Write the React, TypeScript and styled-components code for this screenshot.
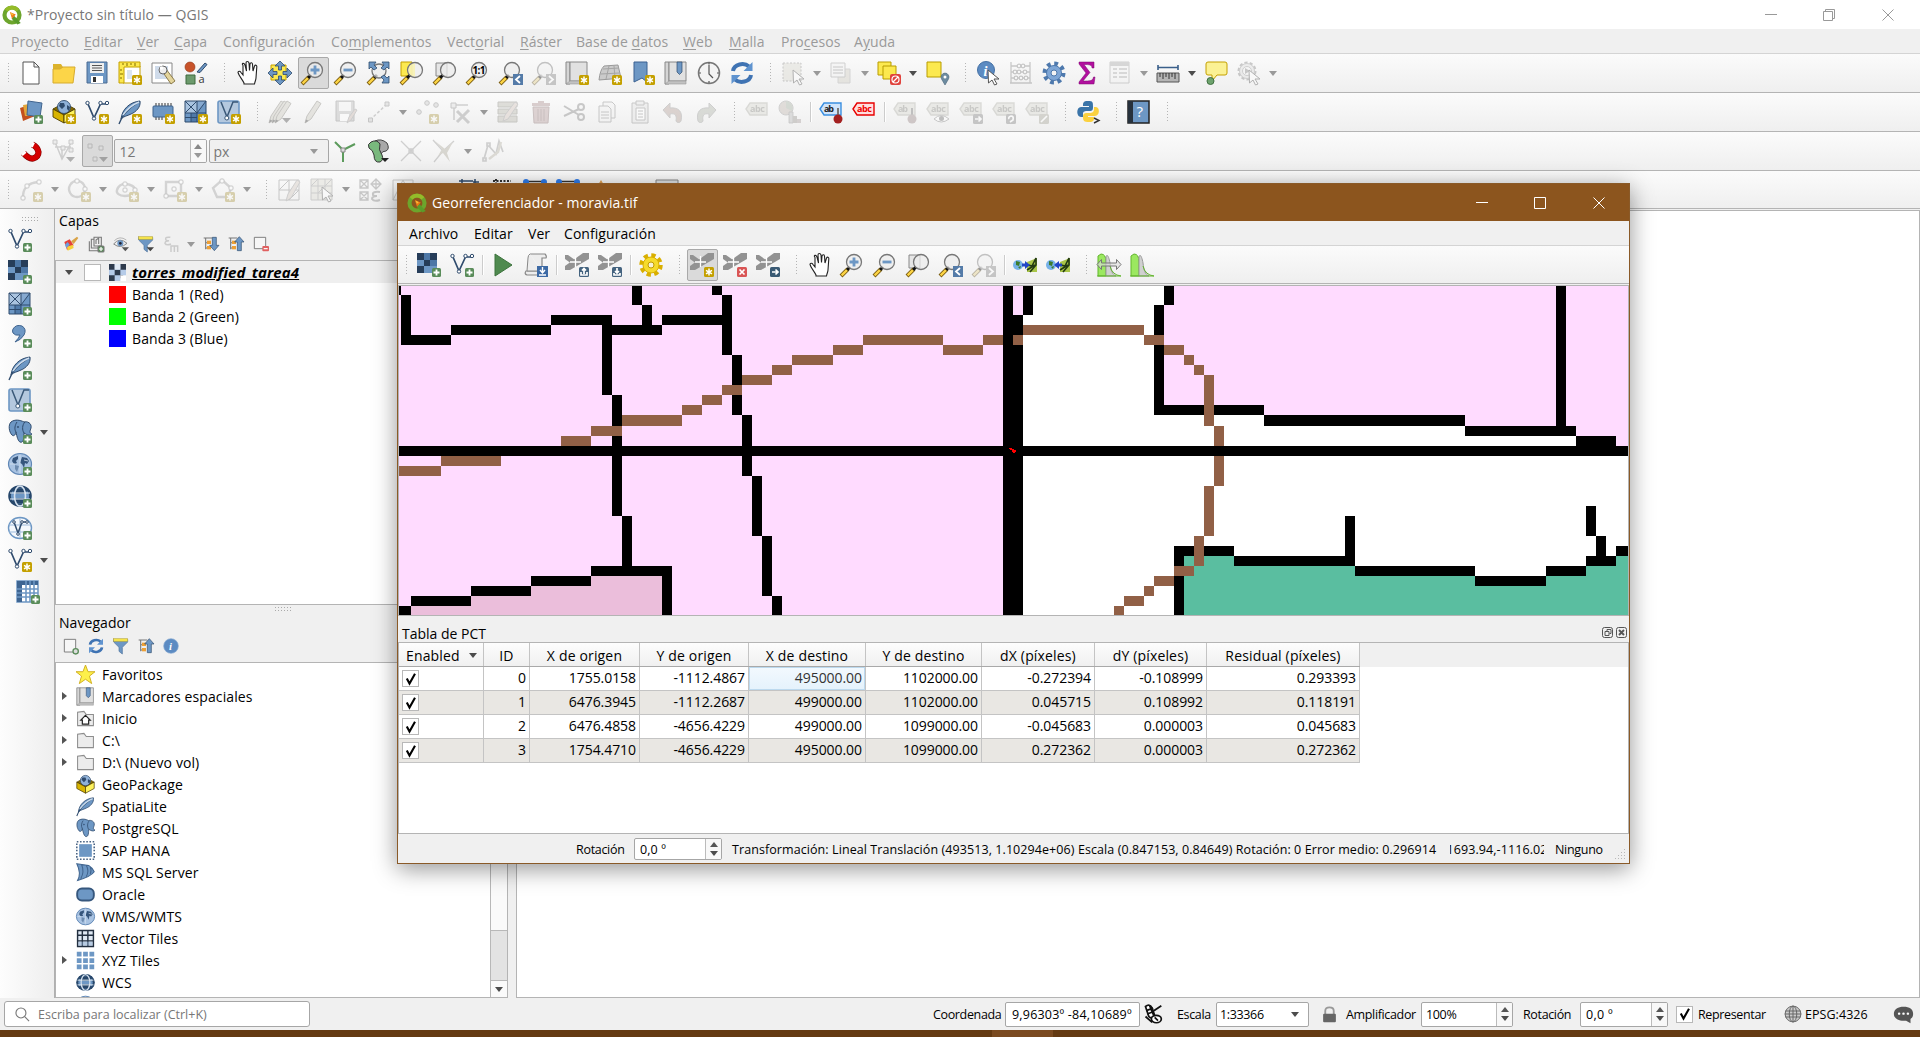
import React from "react";
import styled, { createGlobalStyle, css } from "styled-components";

const Global = createGlobalStyle`
  * { box-sizing: border-box; }
  body { margin: 0; overflow: hidden; }
  #root { font-family: "Open Sans", "Noto Sans", sans-serif; font-size: 14px; color: #000; }
`;

/* ---------- icon building blocks ---------- */

const BLUE = "#6d97c4";
const NAVY = "#2f4b6d";

const Plus = () => (
  <g>
    <rect x="15" y="15" width="9" height="9" rx="1.500" fill="#5a8c5a" />
    <path d="M19.500 16.500v6M16.500 19.500h6" stroke="#fff" strokeWidth="1.800" />
  </g>
);
const Star = () => (
  <g>
    <rect x="14" y="14" width="10" height="10" rx="1.500" fill="#c4a000" />
    <path d="M19 15.500v7M16 17.300l6 3.500M22 17.300l-6 3.500" stroke="#fff" strokeWidth="1.500" />
  </g>
);
const VShape = ({ c = NAVY }: { c?: string }) => (
  <g fill="none" stroke={c} strokeWidth="1.700">
    <path d="M3 4l6 14L15.500 4H21" />
    <g fill="#fff" strokeWidth="1">
      <circle cx="2.500" cy="3" r="1.700" />
      <circle cx="9" cy="18.500" r="1.700" />
      <circle cx="15.500" cy="3" r="1.700" />
      <circle cx="22" cy="3" r="1.700" />
    </g>
  </g>
);
const Lens = ({ x = 14, y = 9, r = 7.5 }: { x?: number; y?: number; r?: number }) => (
  <g>
    <path d="M1 23l7-7" stroke="#7a5c10" strokeWidth="4" />
    <path d="M1.600 22.400l6-6" stroke="#fcd445" strokeWidth="2.300" />
    <path d="M7 17l3-3" stroke="#111" strokeWidth="3" />
    <circle cx={x} cy={y} r={r} fill="#ececec" fillOpacity=".75" stroke="#777" strokeWidth="1.300" />
  </g>
);
const Raster = () => (
  <g>
    <rect x="0" y="0" width="20" height="20" fill={BLUE} />
    <path d="M0 0h7v7H0zM13 0h7v7h-7zM7 7h6v6H7zM0 13h7v7H0z" fill="#263d59" />
    <path d="M7 0h6v7H7zM13 7h7v6h-7z" fill="#4d77a6" />
  </g>
);
const Mesh = () => (
  <g>
    <rect x="1" y="1" width="21" height="21" fill={BLUE} />
    <path d="M1 1h12v12H1z" fill="#a9c3df" />
    <path d="M13 13V1h9z" fill="#86a9d0" />
    <path d="M7 13h6v9H7z" fill="#4f79a8" />
    <g stroke={NAVY} strokeWidth="1" fill="none">
      <path d="M1 1h21v21H1zM13 1v21M1 13h21M7 13v9M1 17.500h12" />
      <path d="M1 1l12 12M13 1L1 13M22 1l-9 12" />
    </g>
  </g>
);
const Feather = () => (
  <g>
    <path d="M3 19C4 9 12 2 22 1c1 6-4 11-9 13-4 2-7 2-10 5z" fill={BLUE} stroke={NAVY} />
    <path d="M1 24C4 15 11 8 20 2.500" stroke={NAVY} strokeWidth="1.300" fill="none" />
    <path d="M5 15C9 9 14 5 21 2" stroke="#cfdeee" strokeWidth="1.500" fill="none" />
  </g>
);
const VBox = () => (
  <g>
    <rect x="1" y="1" width="21" height="22" rx="2" fill="#b4c8de" stroke={BLUE} strokeWidth="1.600" />
    <path d="M4 2l6 15 6-15h5" fill="none" stroke="#3a5878" strokeWidth="1.500" />
    <circle cx="9.800" cy="18" r="2" fill="#fff" stroke="#3a5878" />
  </g>
);
const Elephant = () => (
  <g fill={BLUE} stroke={NAVY} strokeWidth="1">
    <path d="M3 2C0 5 1 12 4 15c2 2 4-1 4-3 1 5 2 9 4 10 3 1 4-2 4-9 3 2 6 3 8 1-3-1-2-3-1-6 1-5-4-7-7-6-4-2-9-3-13 0z" />
    <path d="M8 12C6 9 7 5 9 2M16 13c-2-3-2-8 1-11" fill="none" />
    <circle cx="10" cy="7" r=".6" />
  </g>
);
const World = () => (
  <g>
    <ellipse cx="12" cy="12" rx="11.500" ry="10.500" fill="#a9c3e2" stroke="#6087b5" strokeWidth="1.200" />
    <path d="M5 6l5-2 0 3-2 2 1 2-3 1-2-3zM14 5l5 1 2 3-2 3-2-1-1 5-2-4-2-1 1-3z" fill="#35557c" />
    <path d="M7 13l4 1-2 6-2-3z" fill="#6d8cb0" />
    <path d="M2 12h5M12 3v18M16 8l4 1" stroke="#d6e2f0" strokeWidth=".8" />
  </g>
);
const Globe = ({ c = "#27476b" }: { c?: string }) => (
  <g fill="none" stroke={c} strokeWidth="1.600">
    <ellipse cx="12" cy="12" rx="11" ry="10" fill={c} />
    <ellipse cx="12" cy="12" rx="10" ry="9" fill={BLUE} />
    <path d="M5 5h14l-2 4H7zM5 19h14l-2-4H7z" fill={c} />
    <ellipse cx="12" cy="12" rx="5.500" ry="10" stroke="#d4e0ee" />
    <path d="M2 9h20M2 15h20" stroke="#e6eef6" strokeWidth="1.200" />
  </g>
);
const GeoPack = () => (
  <g stroke="#4d3d00" strokeWidth=".9">
    <path d="M1 9l11-6 11 6-11 6z" fill="#876c00" />
    <circle cx="12" cy="7" r="6.500" fill="#8fb1d8" stroke={NAVY} />
    <path d="M8 3l4 0 1 3-3 3-3-3zM15 5l3 2-1 4-2-2z" fill={NAVY} stroke="none" />
    <path d="M1 9l11 6v8L1 17z" fill="#d8b400" />
    <path d="M23 9l-11 6v8l11-6z" fill="#fdf25c" />
  </g>
);
const Tag = ({ t = "abc", c = "#b3b3a4", f = "#d9d8c8", tc = "#8a8a80" }: { t?: string; c?: string; f?: string; tc?: string }) => (
  <g>
    <path d="M1 9l4-6h17v12H5z" fill={f} stroke={c} strokeWidth="1.400" />
    <text x="5" y="12.300" fontSize="9" fontWeight="700" fill={tc} textLength={t.length * 5}>{t}</text>
  </g>
);
const Pencil = ({ x = 0 }: { x?: number }) => (
  <g transform={`translate(${x} 0)`}>
    <path d="M3 23l2-7L15 1l4 2.500L9 19z" fill="#cfcbb8" stroke="#8a8678" />
    <path d="M3 23l1-3.500 2.500 1.200z" fill="#444" />
  </g>
);
const Hand = () => (
  <path
    transform="translate(2 0)"
    d="M7 22C5 18 2 15 1 11.500c0-1.500 2-1.700 3 0l2 2.500V4.500C4 2 7 1.500 8 4l1.500 6L9 2c0-2 2.500-2 3 0l.5 7.500L13 3c.5-2 2.500-1.500 2.500.2L16 10l1.500-5c.8-1.500 2.500-1 2.300.8L19 17c0 2-1 3-1.500 6H7z"
    fill="#fff"
    stroke="#222"
    strokeWidth="1.100"
  />
);
const Cursor = () => <path d="M12 9l11 9h-5l3 5-2.500 1-2.500-5-3.500 3z" fill="#fff" stroke="#555" />;
const Refresh = () => (
  <g fill="none" stroke="#3f73b3" strokeWidth="4">
    <path d="M3 10C4 3 14 1 19 5.500M21 14c-1 7-11 9-16 4.500" />
    <path d="M22.500 1v9h-9zM1.500 23v-9h9z" fill="#5f93cf" stroke="none" />
  </g>
);
const Arrows4 = () => (
  <g fill={BLUE} stroke={NAVY} strokeWidth=".8">
    <path d="M12 0l5 5h-3.500v4h-3V5H7zM12 24l5-5h-3.500v-4h-3v4H7zM0 12l5-5v3.500h4v3H5V17zM24 12l-5-5v3.500h-4v3h4V17z" />
  </g>
);
const Book = () => (
  <g>
    <path d="M1 1h4v22H1z" fill="#d5d5d5" stroke="#888" />
    <path d="M5 1h17v19H5z" fill="#e1e1e1" stroke="#888" />
    <path d="M1 23l4-3h17v3z" fill="#c2c2c2" stroke="#999" strokeWidth=".6" />
  </g>
);
const Gcp = () => (
  <g>
    <path d="M0 13L18 0h6v6L5 17H0z" fill="#929292" />
    <path d="M0 2h3l7 5-3 4-7-5z" fill="#929292" />
    <path d="M10.500 3v11M5 9h11" stroke="#fff" strokeWidth="1.300" />
  </g>
);
const Tree = ({ up }: { up?: boolean }) => (
  <g>
    <path d="M1 3h13M4 3v17M4 10h5M4 18h5" stroke="#777" strokeWidth="1.600" fill="none" />
    <rect x="6" y="7" width="6" height="5" fill="#eea035" />
    <rect x="6" y="15" width="6" height="5" fill="#eea035" />
    {up ? (
      <path d="M17 1l7 8h-4v13h-6V9h-4z" fill={BLUE} stroke={NAVY} />
    ) : (
      <path d="M17 22l7-8h-4V2h-6v12h-4z" fill={BLUE} stroke={NAVY} />
    )}
  </g>
);
const Logo = () => (
  <g>
    <circle cx="12" cy="12" r="9" fill="none" stroke="#6da52c" strokeWidth="5" />
    <path d="M5 6.500A9 9 0 0 1 19 6.500" fill="none" stroke="#95bb29" strokeWidth="4.500" />
    <path d="M14.500 13l8 8.500-4 2-7-7z" fill="#5a9b2a" />
    <path d="M9.500 8.500l7 3-4.500 5z" fill="#ee7913" />
    <path d="M10 9l4 2-2 2z" fill="#f8c23a" />
  </g>
);
const Folder = () => <path d="M2 21V4l8-1 3 4h9v14z" fill="#ececec" stroke="#8d8d8d" strokeWidth="1.300" />;
const Funnel = () => (
  <g>
    <path d="M1 2h21v4l-8 8v10l-5-4v-6L1 6z" fill={BLUE} stroke="#4a6f9b" />
    <rect x="1" y="1" width="21" height="4" fill="#f5e34a" stroke="#b19c21" strokeWidth=".6" />
  </g>
);
const HistG = () => (
  <g>
    <path d="M1 23V3l3-2q5 0 5 8v14z" fill="#9be860" stroke="#62b52d" />
    <path d="M9 23V4c1-4 3 0 4 6 1 8 2 11 6 13z" fill="#d0d0d0" stroke="#999" />
    <path d="M13 13q2 9 11 10H0" fill="none" stroke="#62b52d" />
  </g>
);
const GlobeLink = ({ back }: { back?: boolean }) => (
  <g>
    <circle cx="5" cy="12" r="5" fill="#76b2e8" />
    <path d="M3 8l4 1-1 4-3-1zM5 14l3-1-1 3z" fill="#3e7c2c" />
    <path d="M14 19V9l10-4v14z" fill="#aac64a" />
    <path d="M15 12l4 1 4-8v7l-6 7M14 17l8-5" fill="none" stroke="#223a12" strokeWidth="1.600" />
    <path d={back ? "M8 12l5-4v2.500h3v3h-3V16z" : "M17 12l-5-4v2.500H9v3h3V16z"} fill="#2346c7" />
  </g>
);
const Shape = ({ d, nodes }: { d: string; nodes: [number, number][] }) => (
  <g>
    <path d={d} fill="none" stroke="#a5a5a5" strokeWidth="2.400" />
    <g fill="#fff" stroke="#888">
      {nodes.map(([x, y]) => <rect key={`${x}-${y}`} x={x} y={y} width="4" height="4" rx="1" />)}
    </g>
    <Star />
  </g>
);
const Node = ({ x, y }: { x: number; y: number }) => <circle cx={x} cy={y} r="2.300" fill="#ccc" stroke="#888" />;
const DownMark = () => <path d="M14 18h9l-4.500 5z" fill="#555" />;
const Sq = ({ c, d }: { c: string; d: string }) => (
  <g><rect x="14" y="14" width="10" height="10" rx="1.500" fill={c} /><path d={d} fill="none" stroke="#fff" strokeWidth="1.700" /></g>
);

const glyphs: Record<string, React.ReactNode> = {
  none: null,
  logo: <Logo />,
  newdoc: <path d="M4 1h11l5 5v17H4zM15 1v5h5" fill="#fff" stroke="#555" />,
  open: <g><path d="M1 3h8l2 3h10v4H1z" fill="#dcb32c" /><path d="M1 22V8h7l3-2h12l-2 16z" fill="#fcd548" stroke="#d6ab2c" /></g>,
  save: <g><path d="M2 1h20v21H2z" fill={BLUE} stroke="#4a6b92" /><path d="M5 2h14v10H5z" fill="#eee" /><path d="M7 4.500h10M7 7h10M7 9.500h10" stroke="#555" /><path d="M6 15h12v7H6z" fill="#fff" /><path d="M8 16h3v5H8z" fill="#333" /></g>,
  layout: <g><path d="M5 5h17v17H5z" fill="#fff" stroke="#c4a000" /><path d="M1 1h21v5H6v16H1z" fill="#fce94f" stroke="#c4a000" /><path d="M5 2v2M9 2v3M13 2v2M17 2v3M2 9h2M2 13h3M2 17h2" stroke="#836c00" /><path d="M9 9h5v9H9z" fill="#dbe5f0" /><Star /></g>,
  layoutmgr: <g><path d="M1 2h20v20H1z" fill="#fff" stroke="#888" /><path d="M4 5h13v13H4z" fill="#cfdbea" /><path d="M11 10l9 13 4-3-9-12z" fill="#e3d49b" stroke="#8b7a4a" /><circle cx="12" cy="9" r="4" fill="#eee" stroke="#666" /><circle cx="10.500" cy="7" r="1.800" fill="#fff" /></g>,
  style: <g><circle cx="6" cy="6" r="5" fill="#c8532a" stroke="#8e3516" strokeWidth=".6" /><path d="M13 11l8-9 2 1.500-7 8z" fill={BLUE} stroke={NAVY} /><path d="M2 14h9v9H2z" fill="#6c9a6c" stroke="#3e6b3e" /><text x="14.500" y="22" fontSize="11" fill="#333">a</text></g>,
  hand: <Hand />,
  pansel: <g><path d="M3 4h15v15H3z" fill="#fce94f" stroke="#c4a000" /><Arrows4 /></g>,
  zoomin: <g><Lens /><path d="M14 4.500v9M9.500 9h9" stroke={BLUE} strokeWidth="2.800" /></g>,
  zoomout: <g><Lens /><path d="M9.500 9h9" stroke={BLUE} strokeWidth="2.800" /></g>,
  zoomfull: <g><Lens x={12} y={10} r={7} /><path d="M2 1h7L7 4l3 3-3 2-3-3-2 2zM22 1h-7l2 3-3 3 3 2 3-3 2 2zM22 22h-7l2-3-3-3 3-2 3 3 2-2z" fill={BLUE} stroke={NAVY} strokeWidth=".8" /></g>,
  zoomsel: <g><path d="M1 1h11v14H1z" fill="#fce94f" stroke="#c4a000" /><Lens x={15} /><path d="M15 2.500a6.500 6.500 0 0 0 0 13z" fill="#fbf3a4" opacity=".7" /></g>,
  zoomlayer: <g><path d="M3 2h11v13H3z" fill="#e6e6e6" stroke="#888" /><Lens x={15} /></g>,
  zoom11: <g><Lens x={13} /><text x="6.500" y="12.500" fontSize="10" fontWeight="700" textLength="13">1:1</text></g>,
  zoomlast: <g><Lens x={13} /><rect x="14" y="13" width="10" height="11" fill="#547ba8" /><path d="M21 15l-4 3.500 4 3.500" fill="none" stroke="#fff" strokeWidth="1.800" /></g>,
  zoomnext: <g><Lens x={13} /><rect x="14" y="13" width="10" height="11" fill="#888" /><path d="M17 15l4 3.500-4 3.500" fill="none" stroke="#fff" strokeWidth="1.800" /></g>,
  newmap: <g><Book /><Star /></g>,
  new3d: <g><path d="M1 19q1-10 5-14l14-1 3 13-10 1z" fill="#cbcbcb" stroke="#999" /><path d="M3 13l18-1M5 8l16-1M11 5L8 18M16 5l1 12" stroke="#a5a5a5" fill="none" /><Star /></g>,
  newbook: <g><path d="M3 1h13v20l-5-4-8 4z" fill={BLUE} stroke="#3a6191" /><Star /></g>,
  book: <g><Book /><path d="M13 1h5v10l-2.500 2.500L13 11z" fill={BLUE} stroke={NAVY} strokeWidth=".7" /></g>,
  clock: <g><circle cx="12" cy="12" r="10.500" fill="#f4f4f4" stroke="#777" strokeWidth="1.500" /><path d="M12 4v9l4 4M12 1.500v2M12 20v2M2 12h2M20 12h2" fill="none" stroke="#555" strokeWidth="1.200" /></g>,
  refresh: <Refresh />,
  select: <g><path d="M2 2h18v18H2z" fill="#dcd9c8" stroke="#888" strokeDasharray="2 1.500" /><Cursor /></g>,
  form: <g><path d="M9 8h12v14H9z" fill="#d6d0bb" stroke="#aaa" /><path d="M2 2h14v14H2z" fill="#f2f2f2" stroke="#999" /><path d="M4 6h10M4 9h10M4 12h10" stroke="#aaa" strokeWidth="1.500" /></g>,
  deselect: <g><path d="M1 1h13v13H1z" fill="#fce94f" stroke="#b89c00" /><path d="M6 5h13v13H6z" fill="#fce94f" stroke="#b89c00" /><rect x="13" y="13" width="11" height="11" rx="2" fill="#e0433d" /><circle cx="18.500" cy="18.500" r="3.500" fill="none" stroke="#fff" strokeWidth="1.200" /><path d="M16 21l5-5" stroke="#fff" strokeWidth="1.200" /></g>,
  selloc: <g><path d="M2 1h14v15H2z" fill="#fce94f" stroke="#b89c00" /><path d="M20 24l-3.500-6a4 4 0 1 1 7 0z" fill="#6c8ba0" stroke="#486478" strokeWidth=".6" /><circle cx="20" cy="16" r="1.500" fill="#fff" /></g>,
  info: <g><circle cx="10" cy="9" r="8.500" fill="#5c8bc2" stroke="#4571a5" /><text x="7.500" y="14.500" fontSize="14" fontStyle="italic" fontWeight="700" fill="#fff" fontFamily="Liberation Serif">i</text><Cursor /></g>,
  abacus: <g fill="#fff" stroke="#888" strokeWidth="1.300"><path d="M2 1v21M21 1v21M1 22h22M2 5h19M2 11h19M2 17h19" /><circle cx="10" cy="5" r="1.800" /><circle cx="14" cy="5" r="1.800" /><circle cx="6" cy="11" r="1.800" /><circle cx="10" cy="11" r="1.800" /><circle cx="16" cy="11" r="1.800" /><circle cx="7" cy="17" r="1.800" /><circle cx="12" cy="17" r="1.800" /><circle cx="17" cy="17" r="1.800" /></g>,
  gear: <g><circle cx="12" cy="12" r="9" fill="none" stroke="#4e79ad" strokeWidth="5" strokeDasharray="3.600 3.460" /><circle cx="12" cy="12" r="7.500" fill="#7ea6d6" stroke="#4e79ad" /><circle cx="12" cy="12" r="3" fill="#f4f4f4" stroke="#4e79ad" /></g>,
  ygear: <g><circle cx="12" cy="12" r="9.500" fill="none" stroke="#d9af00" strokeWidth="4.500" strokeDasharray="4.200 3.260" /><circle cx="12" cy="12" r="8" fill="#f6db2c" stroke="#d9af00" /><circle cx="12" cy="12" r="3" fill="#f7f2d4" stroke="#c29a00" /></g>,
  sigma: <path d="M4 1h15v6h-2c0-3-2-3.500-8-3.500l6 8-7 8.500c7 0 10 0 10.500-4H20l-1 7H4v-2l7-9-7-9z" fill="#b2109f" stroke="#7a0a6c" strokeWidth=".5" />,
  table: <g><path d="M2 1h19v21H2z" fill="#f4f4f4" stroke="#999" /><path d="M2 3h19" stroke="#aaa" strokeWidth="4" /><path d="M5 8h4M11 8h8M5 12h4M11 12h8M5 16h4M11 16h8" stroke="#999" strokeWidth="1.600" /></g>,
  measure: <g><path d="M2 4v5M22 4v5M2 6.500h20" stroke="#3a5f8a" strokeWidth="1.600" /><path d="M1 12h22v9H1z" fill="#b5b5b5" stroke="#555" /><path d="M4 12v4M7 12v6M10 12v4M13 12v6M16 12v4M19 12v6" stroke="#333" /></g>,
  tip: <g><path d="M4 1h17q2 0 2 2v9q0 2-2 2h-8l-5 6v-6H4q-2 0-2-2V3q0-2 2-2z" fill="#fbf194" stroke="#c4a000" /><circle cx="6.500" cy="20" r="3.500" fill="#6ea36e" stroke="#3f703f" /></g>,
  action: <g><circle cx="10" cy="10" r="8" fill="#ddd" stroke="#888" strokeWidth="3" strokeDasharray="3 2" /><circle cx="10" cy="10" r="7.500" fill="#ddd" stroke="#999" /><circle cx="10" cy="10" r="4.500" fill="#f4f4f4" stroke="#999" /><path d="M8 7l5 3-5 3z" fill="#888" /><Cursor /></g>,

  dsm: <g><path d="M1 8l12-4 3 12-12 5z" fill="#c34f1c" /><path d="M4 5l13-2v13H6z" fill="#e2a63a" /><path d="M9 1l14 2-2 14-13-2z" fill={BLUE} stroke="#41658f" /><Plus /></g>,
  geopack: <g><GeoPack /><Star /></g>,
  geopackp: <GeoPack />,
  vnew: <g><VShape /><Star /></g>,
  feathernew: <g><Feather /><Star /></g>,
  chip: <g><path d="M5 3v3M8 3v3M11 3v3M14 3v3M17 3v3M20 3v3M5 17v3M8 17v3M11 17v3" stroke="#555" strokeWidth="1.200" /><rect x="2" y="6" width="20" height="11" rx="1" fill={BLUE} stroke="#3f628b" /><Star /></g>,
  meshnew: <g><Mesh /><Star /></g>,
  vboxnew: <g><VBox /><Star /></g>,
  pens: <g><Pencil x={-2} /><Pencil x={1} /><Pencil x={4} /><DownMark /></g>,
  pen: <Pencil x={1} />,
  saveed: <g><path d="M2 1h18v20H2z" fill="#bbb" stroke="#888" /><path d="M5 2h12v9H5z" fill="#f4f4f4" /><path d="M6 14h9v7H6z" fill="#fff" /><path d="M13 23l2-6 6-8 2 1-6 10z" fill="#d9b8a8" stroke="#999" /></g>,
  line: <g><path d="M3 20L20 4" stroke="#999" strokeWidth="1.500" strokeDasharray="3 2" /><path d="M1.500 18h4v4h-4zM18 2h4v4h-4z" fill="#ccc" stroke="#888" /></g>,
  pts: <g><Node x={12} y={3} /><Node x={4} y={12} /><Node x={21} y={5} /><Star /></g>,
  vertex: <g><path d="M6 20V5h14" fill="none" stroke="#999" strokeWidth="1.500" /><path d="M3 3h5v5H3z" fill="#ddd" stroke="#888" /><path d="M9 22l12-12M9 11l12 12" stroke="#999" strokeWidth="3" /></g>,
  multi: <g><path d="M2 2h19v5H2zM2 9h19v5H2zM2 16h19v6H2z" fill="#bdbba4" stroke="#8c8b7a" /><path d="M7 21l2-6L19 2l3 2-10 15z" fill="#e0c3b4" stroke="#999" /></g>,
  trash: <g><path d="M4 7h16l-1 16H5z" fill="#cf9d9d" stroke="#a07272" /><path d="M3 3h18v3H3zM9 1h6v2H9z" fill="#c58e8e" /><path d="M9 9v12M12 9v12M15 9v12" stroke="#a07272" /></g>,
  cut: <g fill="none" stroke="#888" strokeWidth="2"><path d="M2 6l15 9M2 16l15-7" /><circle cx="19" cy="7" r="3" /><circle cx="19" cy="17" r="3" /></g>,
  copy: <g fill="#f1f1f1" stroke="#888"><path d="M8 2h9l3 3v13H8z" /><path d="M4 6h9l3 3v13H4z" /><path d="M6 12h8M6 15h8M6 18h8" /></g>,
  paste: <g fill="#e3e3e3" stroke="#888"><path d="M4 3h16v20H4z" /><path d="M8 1h8v4H8z" /><path d="M8 8h9v12H8zM10 11h5M10 14h5M10 17h5" fill="#fff" /></g>,
  undo: <path d="M2 10l7-7v5c9-1 13 4 11 13-1 2-4 2-5 0 1-6-1-8-6-7v4z" fill="#c5a090" stroke="#999" />,
  redo: <path d="M22 10l-7-7v5C6 7 2 12 4 21c1 2 4 2 5 0-1-6 1-8 6-7v4z" fill="#b0b8a4" stroke="#999" />,
  tag: <Tag />,
  diagram: <g><path d="M8 1a7 7 0 1 0 .1 0z" fill="#c9b6a8" stroke="#999" /><path d="M8 8V1a7 7 0 0 1 6 10z" fill="#9fb59a" /><path d="M11 12h4v11h-4z" fill="#bbb" stroke="#888" strokeWidth=".8" /><path d="M15 16h4v7h-4z" fill="#a09a90" /><path d="M19 19h4v4h-4z" fill="#b5a0a0" /></g>,
  tagpin: <g><Tag t="ab" c="#3b8fe0" f="#cfe4fb" tc="#222" /><path d="M19 17V8" stroke="#777" strokeWidth="2" /><circle cx="19" cy="19" r="4.500" fill="#a32020" /></g>,
  tagred: <Tag c="#e80000" f="#ffdede" tc="#f00000" />,
  tagpinoff: <g><Tag t="ab" /><path d="M19 17V8" stroke="#777" strokeWidth="2" /><circle cx="19" cy="19" r="4.500" fill="#a88" /></g>,
  tageye: <g><Tag /><path d="M8 19q7-7 15 0-8 6-15 0z" fill="#fff" stroke="#888" /><circle cx="15.500" cy="18.500" r="2.500" fill="#777" /></g>,
  tagmove: <g><Tag /><Sq c="#888" d="M16 19h6M19.500 16.500l2.500 2.500-2.500 2.500" /></g>,
  tagrot: <g><Tag /><Sq c="#888" d="M18 22l3-2q1-4-2-4-3 1-2 3" /></g>,
  taged: <g><Tag /><Sq c="#aaa990" d="M16 22l6-6" /></g>,
  python: <g><path d="M12 1c-5 0-5 2-5 5h6v1H5c-5 0-5 10 0 10h2v-3c0-3 2-3 5-3 4 0 5 0 5-4 0-5 0-6-5-6z" fill="#3a74a8" /><path d="M13 22c5 0 5-2 5-5h-6v-1h7c5 0 5-9 1-9h-2v2c0 4-3 4-6 4-3 0-5 0-5 4 0 4 1 5 6 5z" fill="#fbd13f" /><path d="M18 18l5 2.500-5 2.500" fill="none" stroke="#333" strokeWidth="1.400" /></g>,
  help: <g><path d="M1 1h21v22H1z" fill={BLUE} stroke="#222" strokeWidth="1.500" /><path d="M1 1h5v22H1z" fill="#27313c" /><text x="9.500" y="17" fontSize="15" fill="#fff">?</text></g>,

  magnet: <g fill="none"><path d="M4.500 14q5 6 9.500 5.500 5.500-1.500 5.500-6.500-1-5-6-7.500" stroke="#820000" strokeWidth="6.200" /><path d="M4.500 14q5 6 9.500 5.500 5.500-1.500 5.500-6.500-1-5-6-7.500" stroke="#d40000" strokeWidth="5" /><path d="M4 13.500l1.600 1.800M12.800 5.200l2 1" stroke="#fff" strokeWidth="5" /></g>,
  snapv: <g><path d="M3 3l7 17L19 4M3 8h16M10 20V8" fill="none" stroke="#999" strokeWidth="1.500" /><path d="M1 1h4v4H1zM17 1h4v4h-4zM9 7h4v4H9zM17 9h4v4h-4z" fill="#ddd" stroke="#888" /><DownMark /></g>,
  snapdots: <g><path d="M3 5h4v4H3zM14 7h4v4h-4zM8 18h4v4H8z" fill="#ddd" stroke="#888" /><DownMark /></g>,
  topo: <g><path d="M10 23V11L2 3M10 11l12-6" fill="none" stroke="#5c9b5c" strokeWidth="2" /><path d="M8 9h4v4H8z" fill="#ddd" stroke="#888" /></g>,
  overlap: <g><path d="M9 2q6-3 12 2 3 6-1 8-4 0-5 3l-5-4z" fill="#a8a8a8" stroke="#444" /><path d="M5 3q6-3 9 2-2 6 2 11 2 5-2 7-6 1-6-7Q7 11 3 9 1 5 5 3z" fill="#79b87d" stroke="#333" /><path d="M15 19h8l-4 4z" fill="#222" /></g>,
  cross: <path d="M2 2l20 20M22 2L2 22M10 10h4v4h-4z" fill="none" stroke="#999" strokeWidth="1.300" />,
  self: <g><path d="M1 1l10 11L22 2M11 12L2 23" fill="none" stroke="#999" strokeWidth="1.300" /><path d="M3 2l10 8 8-7-6 11 3 9-7-9-5 3 4-7z" fill="#b5ac90" /></g>,
  trace: <g fill="none" stroke="#999" strokeWidth="1.700"><path d="M4 20l4-14 8 9 3-13 4 11" /><path d="M3 19h3v3H3zM7 4h3v3H7z" fill="#ddd" /><path d="M9 20l9-7 3-10" stroke="#bdb59c" strokeWidth="2.500" /></g>,

  sh1: <Shape d="M4 21Q3 5 20 4" nodes={[[2, 18], [6, 6], [18, 2]]} />,
  sh2: <Shape d="M10 3a8 8 0 1 0 .1 0" nodes={[[8, 1], [16, 9]]} />,
  sh3: <Shape d="M10 6c6 0 10 3 10 6s-4 6-10 6-9-3-8-6 3-6 8-6z" nodes={[[8, 4], [8, 10], [18, 10]]} />,
  sh4: <Shape d="M3 4h15v14H3z" nodes={[[1, 16], [16, 2], [9, 9]]} />,
  sh5: <Shape d="M11 2l9 8-3 9H6L2 10z" nodes={[[9, 1], [18, 8]]} />,
  meshed: <g><path d="M2 2h20v20H2zM2 12h20M12 2v20M2 12L12 2M12 22L22 12" fill="none" stroke="#888" /><path d="M9 23l2-7L20 2l3 2-9 16z" fill="#dcc8b8" stroke="#999" /></g>,
  meshsel: <g><path d="M1 1h21v21H1z" fill="#dddbc9" stroke="#999" /><path d="M1 8h21M1 15h21M8 1v21M15 1v21M1 8L8 1M8 15l14-14" stroke="#999" /><Cursor /></g>,
  meshtr: <g fill="none" stroke="#888" strokeWidth="1.300"><path d="M2 2h8v8H2zM2 2l8 8M10 2l-8 8M18 1l5 5-5 5-5-5zM13 6h10M18 1v10M2 14h8v8H2zM2 14l8 8M10 14l-8 8" /><path d="M22 14q-8-1-7 3 0 1 4 1-5 0-5 3 2 3 8 1" strokeWidth="2" /></g>,
  meshg: <path d="M2 2h20v20H2zM2 22L12 2l10 20" fill="none" stroke="#888" />,
  seg: <g><path d="M3 3.500h18" stroke="#333" strokeWidth="1.500" /><circle cx="3" cy="4" r="3" fill="#2e7bea" /><circle cx="21" cy="4" r="3" fill="#2e7bea" /></g>,
  seg2: <path d="M2 3h14M5 1v6M18 1v6M16 4h6" stroke={NAVY} strokeWidth="1.500" />,
  seg3: <path d="M3 3h18M6 1v6" stroke="#333" strokeWidth="2" strokeDasharray="2 1.500" />,
  seg4: <path d="M9 7l3-5 3 5z" fill="#e0a050" />,
  frame: <g><path d="M1 2h22v20H1z" fill="#dfe2e4" stroke="#888" /><path d="M7 5h10v3H7z" fill="#3f5265" /></g>,

  vplus: <g><VShape /><Plus /></g>,
  rasterplus: <g><Raster /><Plus /></g>,
  meshplus: <g><Mesh /><Plus /></g>,
  comma: <g><path d="M5 5q3-5 9-3 5 3 2 9-3 5-9 7 4-4 5-7-5 1-7-2-1-2 0-4z" fill={BLUE} stroke="#41658f" /><Plus /></g>,
  featherplus: <g><Feather /><Plus /></g>,
  feather: <Feather />,
  vboxplus: <g><VBox /><Plus /></g>,
  elplus: <g><Elephant /><Plus /></g>,
  el: <Elephant />,
  worldplus: <g><World /><Plus /></g>,
  world: <World />,
  globeplus: <g><Globe /><Plus /></g>,
  globe: <Globe />,
  wfs: <g><ellipse cx="12" cy="12" rx="11.500" ry="10.500" fill="#f4f8fc" stroke={BLUE} strokeWidth="1.400" /><path d="M1 9h22M1 16h22M12 2v20" stroke="#9dbadb" /><path d="M6 6l4 11 4-11h5" fill="none" stroke={NAVY} strokeWidth="1.500" /><g fill="#fff" stroke={NAVY}><circle cx="6" cy="6" r="1.300" /><circle cx="10" cy="18" r="1.300" /><circle cx="14" cy="6" r="1.300" /><circle cx="19" cy="6" r="1.300" /></g><Plus /></g>,
  gridplus: <g><path d="M1 1h21v21H1z" fill="#fff" stroke={BLUE} strokeWidth="1.500" /><path d="M1 1h21v4H1zM1 1h5v21H1z" fill="#3e6592" /><path d="M1 9h21M1 13h21M1 17h21M10 1v21M14 1v21M18 1v21" stroke={BLUE} strokeWidth="1.600" /><Plus /></g>,

  brush: <g><path d="M2 9l8-4 6 9-10 7z" fill="#e5403a" /><path d="M6 16l9-3 1 5-9 4z" fill="#f6d13b" /><path d="M12 8l9-7 2 2-7 9z" fill="#d9a347" /><path d="M3 13l4-4 3 4-5 5z" fill="#6ba0e0" /></g>,
  addgrp: <g fill="#eee" stroke="#777" strokeWidth="1.600"><path d="M2 8v14h14" fill="none" /><path d="M5 5v13h13V5z" /><path d="M9 2v13h11V2z" /><path d="M12 12V6l4-3v9" fill="none" /><Plus /></g>,
  eye: <g><path d="M1 12Q10 1 21 11 11 20 1 12z" fill="#eee" stroke="#888" strokeWidth="1.500" /><circle cx="11" cy="11" r="4.500" fill={BLUE} /><circle cx="11" cy="11" r="2" fill="#223" /><path d="M2 7Q10-1 20 6" fill="none" stroke="#999" /><path d="M13 17h11l-5.500 6z" fill="#555" /></g>,
  filt: <g><Funnel /><path d="M13 17h11l-5.500 6z" fill="#444" /></g>,
  funnel: <Funnel />,
  eps: <g fill="none" stroke="#999" strokeWidth="2.200"><path d="M11 2Q3 1 4 5q1 3 5 2-6 0-6 4 2 4 9 1" /><path d="M12 24v-9h10v9M17 15v9" /></g>,
  tdown: <Tree />,
  tup: <Tree up />,
  rmlayer: <g><path d="M2 2h17v17H2z" fill="#f6f6f6" stroke="#777" strokeWidth="1.400" /><rect x="14" y="15" width="10" height="8" rx="1.500" fill="#e06060" /><path d="M16 19h6" stroke="#fff" strokeWidth="1.800" /></g>,
  addlayer: <g><path d="M2 2h17v19H2z" fill="#f6f6f6" stroke="#777" strokeWidth="1.400" /><circle cx="19" cy="20" r="4" fill="#ddd" stroke="#5a8c5a" strokeWidth="2" /></g>,
  infoc: <g><circle cx="12" cy="12" r="11" fill="#5c8bc2" stroke="#86a9d1" /><text x="9" y="18" fontSize="16" fontStyle="italic" fontWeight="700" fill="#fff" fontFamily="Liberation Serif">i</text></g>,
  fav: <path d="M12 0l3.200 8.500H24l-7 5.500 2.800 9.500L12 18l-7.800 5.500L7 14 0 8.500h8.800z" fill="#fdf04a" stroke="#d0ae1e" strokeWidth="1.200" />,
  home: <g><Folder /><path d="M6 14l6-6 6 6h-2v5H8v-5z" fill="#fff" stroke="#222" strokeWidth="1.500" /></g>,
  folder: <Folder />,
  hana: <g><rect x="4" y="4" width="16" height="16" fill={BLUE} /><rect x="1" y="1" width="22" height="22" fill="none" stroke="#4a6484" strokeWidth="2" strokeDasharray="2 2" /></g>,
  mssql: <path d="M1 1l15 2q5 3 7 8-4 6-21 11 5-9-1-21zM7 2q4 9-1 18M13 3q4 7 0 14M18 5q2 4 0 9" fill={BLUE} stroke="#41658f" strokeWidth="1.300" />,
  oracle: <rect x="1.500" y="4.500" width="21" height="15" rx="6" fill={BLUE} stroke="#36577d" strokeWidth="2.400" />,
  vtiles: <g><path d="M2 2h20v20H2z" fill="#dfe9f4" stroke="#222f40" strokeWidth="1.800" /><path d="M2 8h20M2 15h20M8 2v20M15 2v20" stroke="#222f40" strokeWidth="1.800" /><path d="M3 16h18v5H3z" fill="#8faed0" opacity=".5" /></g>,
  xyz: <path d="M1 1h6v6H1zM9 1h6v6H9zM17 1h6v6h-6zM1 9h6v6H1zM9 9h6v6H9zM17 9h6v6h-6zM1 17h6v6H1zM9 17h6v6H9zM17 17h6v6h-6z" fill={BLUE} />,
  rast: <g><rect width="24" height="24" fill="#b5cbe8" /><path d="M0 0h8v8H0zM16 0h8v8h-8zM8 8h8v8H8zM0 16h8v8H0zM16 16h4v4h-4z" fill="#2e3a4c" /><path d="M8 0h8v8H8z" fill="#e1eaf5" /><path d="M16 16h8v8h-8z" fill="#fff" /></g>,

  play: <path d="M4 1l17 11L4 23z" fill="#4f8a4f" stroke="#3c723c" />,
  script: <g><path d="M6 1h15q2 2 1 4h-4v13H2q-2 3 1 4h14l1-4" fill="#ededed" stroke="#888" strokeWidth="1.200" /><path d="M6 1q-2 1-2 4l-1 13h14" fill="#ededed" stroke="#888" /><rect x="13" y="13" width="11" height="11" fill="#3d6aa5" /><path d="M18.500 14v5M16 17l2.500 3 2.500-3M15 22h7" stroke="#fff" fill="none" strokeWidth="1.400" /></g>,
  gcpload: <g><Gcp /><Sq c="#44637f" d="M19 21v-5M17 17.500l2-2 2 2M16 19v3h6v-3" /></g>,
  gcpsave: <g><Gcp /><Sq c="#44637f" d="M19 15v5M17 18l2 2 2-2M16 20v2h6v-2" /></g>,
  gcpadd: <g><Gcp /><Star /></g>,
  gcpdel: <g><Gcp /><Sq c="#d95555" d="M16.500 16.500l5 5M21.500 16.500l-5 5" /></g>,
  gcpmove: <g><Gcp /><Sq c="#3a5a74" d="M16 19h6M19.500 16.500l2.500 2.500-2.500 2.500" /></g>,
  linkto: <GlobeLink />,
  linkback: <GlobeLink back />,
  histstretch: <g><HistG /><path d="M0 11.500l4.500-5v3.500h15V6.500l4.500 5-4.500 5V13h-15v3.500z" fill="#ddd" fillOpacity=".6" stroke="#777" /></g>,
  hist: <HistG />,
  search: <g fill="none" stroke="#777" strokeWidth="1.800"><circle cx="9.500" cy="9.500" r="8" /><path d="M15.500 15.500l7 7" /></g>,
  track: <g fill="#fff" stroke="#111" strokeWidth="2.100"><path d="M3 3q5-4 8 2l3 9q-4 5-7 1z" /><path d="M8 2l5 12M4 8l8-3M5 12l8-3" /><ellipse cx="16" cy="18" rx="6" ry="4.500" /><path d="M3 15l8 7M14 16l4 4M13 8l9-6" fill="none" /></g>,
  lock: <g><path d="M6 12V7q0-5 6-5t6 5v5" fill="none" stroke="#999" strokeWidth="2.600" /><rect x="3" y="11" width="18" height="12" rx="1.500" fill="#666" /></g>,
  crs: <g fill="#ccc" stroke="#666" strokeWidth="1.300"><circle cx="12" cy="12" r="10.500" /><ellipse cx="12" cy="12" rx="5" ry="10.500" /><path d="M2 8h20M1 12h22M2 16h20M12 1v22" /></g>,
  bubble: <g><path d="M12 3c7 0 11 3 11 8 0 3-1 5-3 6v5l-5-3c-8 1-14-2-14-8 0-5 5-8 11-8z" fill="#555" /><g fill="#fff"><circle cx="7" cy="11" r="1.400" /><circle cx="12" cy="11" r="1.400" /><circle cx="17" cy="11" r="1.400" /></g></g>,
};

const Svg = styled.svg<{ $s: number; $off?: boolean }>`
  width: ${(p) => p.$s}px;
  height: ${(p) => p.$s}px;
  flex: none;
  display: block;
  overflow: visible;
  ${(p) => p.$off && css`opacity: 0.42; filter: saturate(0.5);`}
`;
const Icon = ({ n, s = 24, off }: { n: string; s?: number; off?: boolean }) => (
  <Svg viewBox="0 0 24 24" $s={s} $off={off}>{glyphs[n]}</Svg>
);

/* ---------- shared pieces ---------- */

const Bar = styled.div<{ $h: number }>`
  height: ${(p) => p.$h}px;
  flex: none;
  display: flex;
  align-items: center;
  background: linear-gradient(#fbfbfb, #efefef);
  border-bottom: 1px solid #b4b4b4;
`;
const Grip = styled.div<{ $first?: boolean }>`
  width: ${(p) => (p.$first ? 14.5 : 18)}px;
  height: 22px;
  flex: none;
  padding: 0 5px 0 ${(p) => (p.$first ? 6.5 : 10)}px;
  background: radial-gradient(circle, #b5b5b5 0.8px, transparent 1px) 0 0 / 3px 3px;
  background-origin: content-box;
  background-clip: content-box;
`;
const Cell = styled.div<{ $on?: boolean }>`
  width: 33px;
  height: 32px;
  flex: none;
  display: flex;
  align-items: center;
  justify-content: center;
  ${(p) =>
    p.$on &&
    css`
      width: 31px;
      margin: 0 1px;
      background: #dadada;
      border: 1px solid #a9a9a9;
      border-radius: 2px;
    `}
`;
const Caret = styled.div<{ $w?: number; $off?: boolean; $up?: boolean; $right?: boolean }>`
  width: ${(p) => p.$w ?? 15}px;
  flex: none;
  display: flex;
  justify-content: center;
  &::after {
    content: "";
    border: 4.5px solid transparent;
    ${(p) =>
      p.$right
        ? css`border-left: 5px solid #555; border-right: 0;`
        : p.$up
          ? css`border-bottom: 5px solid ${p.$off ? "#888" : "#555"}; border-top: 0;`
          : css`border-top: 5px solid ${p.$off ? "#999" : "#4c4c4c"}; border-bottom: 0;`}
  }
`;
const Sep = styled.div`
  width: 2px;
  height: 20px;
  margin: 0 3px;
  flex: none;
  border-left: 1px solid #ccc;
  border-right: 1px solid #fff;
`;

/* "|" grip, "/" separator, "v" caret, "w" pale caret; "~x" disabled, "*x" pressed */
const Tools = ({ items }: { items: string }) => (
  <>
    {items.split(" ").map((t, i) => {
      if (t === "|") return <Grip key={i} $first={i === 0} />;
      if (t === "/") return <Sep key={i} />;
      if (t === "v" || t === "w") return <Caret key={i} $off={t === "w"} />;
      const off = t.includes("~");
      return (
        <Cell key={i} $on={t.includes("*")}>
          <Icon n={t.replace(/[~*]/g, "")} off={off} />
        </Cell>
      );
    })}
  </>
);

const Page = styled.div`
  width: 1920px;
  height: 1037px;
  position: relative;
  display: flex;
  flex-direction: column;
  background: #f0f0f0;
  overflow: hidden;
`;
const TitleBar = styled.div<{ $dark?: boolean }>`
  height: ${(p) => (p.$dark ? 37 : 29)}px;
  flex: none;
  display: flex;
  align-items: center;
  gap: 5px;
  padding-left: ${(p) => (p.$dark ? 9 : 2)}px;
  background: ${(p) => (p.$dark ? "#8c551e" : "#fff")};
  color: ${(p) => (p.$dark ? "#fff" : "#777")};
  letter-spacing: 0.08px;
`;
const TitleText = styled.div`
  flex: 1;
  white-space: nowrap;
`;
const WinButtons = styled.svg<{ $right: number; $c: string }>`
  height: 14px;
  width: 132px;
  flex: none;
  fill: none;
  stroke: ${(p) => p.$c};
  stroke-width: 1;
  margin-right: ${(p) => p.$right}px;
`;
const Menu = styled.div<{ $dim?: boolean }>`
  height: 25px;
  flex: none;
  display: flex;
  align-items: center;
  padding-left: 11px;
  color: ${(p) => (p.$dim ? "#9a9a9a" : "#000")};
  border-bottom: 1px solid #d4d4d4;
`;
const MenuItem = styled.div<{ $w: number }>`
  width: ${(p) => p.$w}px;
  flex: none;
  white-space: nowrap;
  letter-spacing: 0.06px;
  u { text-underline-offset: 2px; }
`;
const Spin = styled.div<{ $w: number; $h?: number; $dim?: boolean; $pad?: number; $ls?: number }>`
  width: ${(p) => p.$w}px;
  height: ${(p) => p.$h ?? 25}px;
  flex: none;
  display: flex;
  align-items: center;
  padding-left: ${(p) => p.$pad ?? 5}px;
  border: 1px solid #a6a6a6;
  border-radius: 2px;
  background: ${(p) => (p.$dim ? "#f0f0f0" : "#fff")};
  color: ${(p) => (p.$dim ? "#777" : "#000")};
  overflow: hidden;
  white-space: nowrap;
  ${(p) => p.$ls !== undefined && css`letter-spacing: ${p.$ls}px;`}
`;
const Grow = styled.div`flex: 1;`;
const Steps = styled.div`
  width: 16px;
  align-self: stretch;
  display: flex;
  flex-direction: column;
  align-items: center;
  justify-content: center;
  gap: 4px;
  border-left: 1px solid #bbb;
  background: #f8f8f8;
`;
const Stepper = ({ off }: { off?: boolean }) => <Steps><Caret $up $off={off} /><Caret $off={off} /></Steps>;

const Body = styled.div`
  flex: 1;
  min-height: 0;
  display: flex;
`;
const SideBar = styled.div`
  width: 55px;
  flex: none;
  display: flex;
  flex-direction: column;
  padding-top: 7px;
  background: linear-gradient(90deg, #fdfdfd, #eee);
  border-right: 1px solid #b0b0b0;
`;
const SideList = styled.div`
  display: flex;
  flex-direction: column;
  padding-top: 3px;
`;
const HGrip = styled.div<{ $x: number }>`
  width: 17px;
  height: 5px;
  flex: none;
  margin-left: ${(p) => p.$x}px;
  background: radial-gradient(circle, #aaa 0.8px, transparent 1px) 0 0 / 3px 3px;
`;
const SideRow = styled.div<{ $in?: boolean }>`
  height: 32px;
  flex: none;
  display: flex;
  align-items: center;
  padding-left: ${(p) => (p.$in ? 16 : 8)}px;
  gap: 4px;
`;
const Docks = styled.div`
  width: 453px;
  flex: none;
  display: flex;
  flex-direction: column;
`;
const DockTitle = styled.div<{ $h: number }>`
  height: ${(p) => p.$h}px;
  padding-left: 4px;
  line-height: ${(p) => p.$h}px;
  flex: none;
  letter-spacing: 0.06px;
`;
const DockTools = styled.div`
  height: 28px;
  flex: none;
  display: flex;
  align-items: center;
  padding: 0 0 4px 3px;
`;
const SmallCell = styled.div`
  width: 25px;
  flex: none;
  display: flex;
  justify-content: center;
`;
const Frame = styled.div<{ $h: number }>`
  height: ${(p) => p.$h}px;
  flex: none;
  display: flex;
  overflow: hidden;
  background: #fff;
  border: 1px solid #b4b4b4;
`;
const List = styled.div`
  flex: 1;
  display: flex;
  flex-direction: column;
`;
const Row = styled.div<{ $sel?: boolean; $pad: number }>`
  height: 22px;
  flex: none;
  display: flex;
  align-items: center;
  padding-left: ${(p) => p.$pad}px;
  background: ${(p) => (p.$sel ? "#efefef" : "transparent")};
  white-space: nowrap;
  letter-spacing: 0.1px;
`;
const Lead = styled.div<{ $w: number }>`
  width: ${(p) => p.$w}px;
  flex: none;
  display: flex;
  align-items: center;
`;
const Swatch = styled.div<{ $c: string }>`
  width: 17px;
  height: 17px;
  background: ${(p) => p.$c};
  margin-right: 6px;
`;
const LayerName = styled.span`
  font-weight: 700;
  font-style: italic;
  font-size: 15px;
  text-decoration: underline;
  letter-spacing: 0.1px;
`;
const Box = styled.div`
  width: 17px;
  height: 17px;
  flex: none;
  background: #fff;
  border: 1px solid #b8b8b8;
  display: flex;
  align-items: center;
  justify-content: center;
`;
const Tick = () => (
  <Svg viewBox="0 0 12 12" $s={12}><path d="M1.800 5.500L4.500 10.500 10 .8" fill="none" stroke="#000" strokeWidth="2.100" /></Svg>
);
const Splitter = styled.div`
  height: 7px;
  flex: none;
  display: flex;
  align-items: center;
`;
const Scroll = styled.div`
  width: 17px;
  flex: none;
  display: flex;
  flex-direction: column;
  justify-content: flex-end;
  background: #fafafa;
  border-left: 1px solid #b8b8b8;
`;
const Thumb = styled.div`
  height: 51px;
  background: #e3e3e3;
  border: solid #b8b8b8;
  border-width: 1px 0;
`;
const ScrollEnd = styled.div`
  height: 16px;
  display: flex;
  align-items: center;
  justify-content: center;
`;
const Canvas = styled.div`
  flex: 1;
  margin: 1px 0 0 8px;
  background: #fff;
  border: 1px solid #b4b4b4;
`;
const Status = styled.div`
  height: 32px;
  flex: none;
  display: flex;
  align-items: center;
  padding: 0 6px 0 4px;
  font-size: 12.5px;
  letter-spacing: -0.35px;
`;
const Search = styled.div`
  width: 306px;
  height: 26px;
  margin-right: 623px;
  display: flex;
  align-items: center;
  gap: 8px;
  padding-left: 10px;
  border: 1px solid #a6a6a6;
  border-radius: 3px;
  background: #fff;
  color: #777;
  letter-spacing: 0;
`;
const Label = styled.div<{ $w: number; $ls?: number }>`
  width: ${(p) => p.$w}px;
  flex: none;
  white-space: nowrap;
  ${(p) => p.$ls !== undefined && css`letter-spacing: ${p.$ls}px;`}
`;
const Taskbar = styled.div`
  height: 7px;
  flex: none;
  background: linear-gradient(90deg, #643a12 992px, #7a4a20 992px, #7a4a20 1053px, #643a12 1053px);
`;

/* ---------- georeferencer window ---------- */

const Dialog = styled.div`
  position: absolute;
  left: 397px;
  top: 183px;
  width: 1233px;
  height: 681px;
  display: flex;
  flex-direction: column;
  background: #f0f0f0;
  border: 1px solid #8a5a28;
  box-shadow: 0 5px 22px rgba(0, 0, 0, 0.42);
`;
const MapFrame = styled.div`
  margin-top: 1px;
  height: 331px;
  flex: none;
  border: 1px solid #b4b4b4;
`;
const MapSvg = styled.svg`
  display: block;
  width: 1229px;
  height: 329px;
`;
const PctHead = styled.div`
  height: 26px;
  flex: none;
  display: flex;
  align-items: flex-end;
  justify-content: space-between;
  padding: 0 2px 0 4px;
  line-height: 16px;
`;
const PctButtons = styled.svg`
  width: 25px;
  height: 18px;
  fill: none;
  stroke: #555;
`;
const TableFrame = styled.div`
  height: 192px;
  flex: none;
  background: linear-gradient(#f0f0f0 24px, #fff 24px);
  border: 1px solid #b4b4b4;
`;
const TRow = styled.div<{ $alt?: boolean; $head?: boolean }>`
  width: 961px;
  height: 24px;
  display: grid;
  grid-template-columns: 85px 46px 110px 109px 117px 116px 113px 112px 153px;
  background: ${(p) => (p.$head ? "linear-gradient(#fdfdfd,#f0f0f0)" : p.$alt ? "#e9e7e3" : "#fff")};
  border-bottom: 1px solid ${(p) => (p.$head ? "#a9a9a9" : "#c4c4c4")};
`;
const TCell = styled.div<{ $head?: boolean; $cur?: boolean }>`
  display: flex;
  align-items: center;
  justify-content: ${(p) => (p.$head ? "center" : "flex-end")};
  padding: ${(p) => (p.$head ? "2px 0 0 0" : "0 3px 2px 0")};
  border-right: 1px solid #c4c4c4;
  white-space: nowrap;
  letter-spacing: ${(p) => (p.$head ? 0.16 : -0.06)}px;
  &:first-child { justify-content: flex-start; padding: ${(p) => (p.$head ? "2px 0 0 7px" : "0 0 0 3px")}; }
  ${(p) => p.$cur && css`background: linear-gradient(#f3f9fe, #e4f2fc); box-shadow: inset 0 0 0 1px #bcd9ee; color: #333;`}
`;
const DStatus = styled.div`
  flex: 1;
  display: flex;
  align-items: center;
  padding: 1px 0 0 178px;
  font-size: 12.5px;
  letter-spacing: -0.3px;
  white-space: nowrap;
`;
const Clip = styled.div`
  width: 94px;
  margin: 0 11px 0 13px;
  overflow: hidden;
  display: flex;
  justify-content: center;
  letter-spacing: 0.1px;
`;
const SizeGrip = styled.svg`
  width: 12px;
  height: 12px;
  align-self: flex-end;
  margin: 0 2px 2px auto;
  fill: #b8b8b8;
`;

type R = [number, number, number, number];
const ink: R[] = [
  [399,286,401,295],[401,295,411,345],[401,335,451,345],[451,325,551,335],[551,315,612,325],[602,315,612,395],
  [612,325,662,335],[632,286,642,305],[642,305,652,325],[662,315,732,325],[712,286,722,295],[722,295,732,355],
  [732,355,742,415],[742,415,752,476],[752,476,762,536],[762,536,772,596],[772,596,782,615],[612,395,622,516],
  [622,516,632,566],[591,566,672,576],[662,566,672,615],[531,576,591,586],[471,586,531,596],[411,596,471,606],
  [399,606,411,615],[1003,286,1013,615],[1013,315,1023,615],[1023,286,1033,315],[1164,286,1174,305],
  [1154,305,1164,415],[1154,405,1264,415],[1264,415,1465,426],[1465,426,1576,436],[1556,286,1566,436],
  [1576,436,1616,446],[1174,546,1184,615],[1174,546,1234,556],[1234,556,1355,566],[1345,516,1355,566],
  [1355,566,1475,576],[1475,576,1546,586],[1546,566,1586,576],[1586,556,1616,566],[1586,506,1596,536],
  [1596,536,1606,556],[1616,546,1628,556],
];
const road: R[] = [
  [399,466,441,476],[441,456,501,466],[561,436,591,446],[591,426,622,436],[622,415,682,426],[682,405,702,415],
  [702,395,722,405],[722,385,742,395],[742,375,772,385],[772,365,792,375],[792,355,833,365],[833,345,863,355],
  [863,335,943,345],[943,345,983,355],[983,335,1003,345],[1013,335,1023,345],[1023,325,1144,335],
  [1144,335,1164,345],[1164,345,1184,355],[1184,355,1194,365],[1194,365,1204,375],[1204,375,1214,426],
  [1214,426,1224,446],[1214,456,1224,486],[1204,486,1214,536],[1194,536,1204,566],[1174,566,1194,576],
  [1154,576,1174,586],[1144,586,1154,596],[1124,596,1144,606],[1114,606,1124,615],
];
const toPath = (rs: R[]) => rs.map(([a, b, c, d]) => `M${a} ${b}H${c}V${d}H${a}z`).join("");

const RasterMap = () => (
  <MapSvg viewBox="399 286 1229 329" shapeRendering="crispEdges">
    <rect x="399" y="286" width="1229" height="329" fill="#fff" />
    <path d="M399 286H1023V315H1013V615H399z" fill="#ffdbff" />
    <path d="M1174 286H1628V446H1616V436H1576V426H1465V415H1264V405H1164V305H1174z" fill="#ffdbff" />
    <path d="M411 606H471V596H531V586H591V576H662V615H411z" fill="#ebbedb" />
    <path d="M1184 556H1234V566H1355V576H1475V586H1546V576H1586V566H1616V556H1628V615H1184z" fill="#5abea0" />
    <path d={toPath(ink)} fill="#000" fillRule="nonzero" />
    <path d={toPath(road)} fill="#916046" />
    <path d="M399 446H1628V456H399z" fill="#000" />
    <path d="M1009 448h3v1h2v1h2v2h-1v1h-2v-1h-1v-2h-2v-1h-1z" fill="#f00" />
  </MapSvg>
);

const columns = ["ID", "X de origen", "Y de origen", "X de destino", "Y de destino", "dX (píxeles)", "dY (píxeles)", "Residual (píxeles)"];
const points = [
  ["0", "1755.0158", "-1112.4867", "495000.00", "1102000.00", "-0.272394", "-0.108999", "0.293393"],
  ["1", "6476.3945", "-1112.2687", "499000.00", "1102000.00", "0.045715", "0.108992", "0.118191"],
  ["2", "6476.4858", "-4656.4229", "499000.00", "1099000.00", "-0.045683", "0.000003", "0.045683"],
  ["3", "1754.4710", "-4656.4229", "495000.00", "1099000.00", "0.272362", "0.000003", "0.272362"],
];

const Georeferencer = () => (
  <Dialog>
    <TitleBar $dark>
      <Icon n="logo" s={20} />
      <TitleText>Georreferenciador - moravia.tif</TitleText>
      <WinButtons viewBox="0 0 132 14" $right={24} $c="#fff">
        <path d="M3 6.500h12M61.500 1.500h11v11h-11zM120.500 1.500l11 11M131.500 1.500l-11 11" />
      </WinButtons>
    </TitleBar>
    <Menu>
      <MenuItem $w={65}>Archivo</MenuItem>
      <MenuItem $w={54}>Editar</MenuItem>
      <MenuItem $w={36}>Ver</MenuItem>
      <MenuItem $w={100}>Configuración</MenuItem>
    </Menu>
    <Bar $h={38}>
      <Tools items="| rasterplus vplus / play script / gcpload gcpsave / ygear | *gcpadd gcpdel gcpmove | hand zoomin zoomout zoomlayer zoomlast ~zoomnext / linkto linkback | histstretch hist" />
    </Bar>
    <MapFrame><RasterMap /></MapFrame>
    <PctHead>
      Tabla de PCT
      <PctButtons viewBox="0 0 25 18">
        <rect x=".5" y="3.500" width="10" height="10" rx="2" />
        <rect x="14.500" y="3.500" width="10" height="10" rx="2" />
        <path d="M3 7.500h4v4H3zM5 7V5.500h4v4H7.500" />
        <path d="M17 6l5 5M22 6l-5 5" strokeWidth="1.900" />
      </PctButtons>
    </PctHead>
    <TableFrame>
      <TRow $head>
        <TCell $head>Enabled<Caret $w={27} /></TCell>
        {columns.map((c) => <TCell $head key={c}>{c}</TCell>)}
      </TRow>
      {points.map((p, i) => (
        <TRow key={i} $alt={i % 2 === 1}>
          <TCell><Box><Tick /></Box></TCell>
          {p.map((v, j) => <TCell key={j} $cur={i === 0 && j === 3}>{v}</TCell>)}
        </TRow>
      ))}
    </TableFrame>
    <DStatus>
      <Label $w={58}>Rotación</Label>
      <Spin $w={88} $h={22} $ls={0.1}>0,0 º<Grow /><Stepper /></Spin>
      <Label $w={10} />
      <Label $w={705} $ls={0.08}>Transformación: Lineal Translación (493513, 1.10294e+06) Escala (0.847153, 0.84649) Rotación: 0 Error medio: 0.296914</Label>
      <Clip>1693.94,-1116.02</Clip>
      Ninguno
      <SizeGrip viewBox="0 0 12 12">
        <path d="M9 0h1v1H9zM9 3h1v1H9zM9 6h1v1H9zM9 9h1v1H9zM6 3h1v1H6zM6 6h1v1H6zM6 9h1v1H6zM3 6h1v1H3zM3 9h1v1H3zM0 9h1v1H0z" />
      </SizeGrip>
    </DStatus>
  </Dialog>
);

/* ---------- main window data ---------- */

const menus: [string, string, string, number][] = [
  ["Pro", "y", "ecto", 73], ["", "E", "ditar", 53], ["", "V", "er", 37], ["", "C", "apa", 49],
  ["Confi", "g", "uración", 108], ["Co", "m", "plementos", 116], ["Vect", "o", "rial", 73], ["", "R", "áster", 56],
  ["Base de ", "d", "atos", 107], ["", "W", "eb", 46], ["", "M", "alla", 52], ["Pro", "c", "esos", 73], ["A", "y", "uda", 50],
];
const side: [string, boolean?, boolean?][] = [
  ["vplus"], ["rasterplus"], ["meshplus"], ["comma"], ["featherplus"], ["vboxplus"], ["elplus", true],
  ["worldplus"], ["globeplus"], ["wfs"], ["vnew", true], ["gridplus", false, true],
];
const places: [string, string, boolean?][] = [
  ["fav", "Favoritos"], ["book", "Marcadores espaciales", true], ["home", "Inicio", true], ["folder", "C:\\", true],
  ["folder", "D:\\ (Nuevo vol)", true], ["geopackp", "GeoPackage"], ["feather", "SpatiaLite"], ["el", "PostgreSQL"],
  ["hana", "SAP HANA"], ["mssql", "MS SQL Server"], ["oracle", "Oracle"], ["world", "WMS/WMTS"],
  ["vtiles", "Vector Tiles"], ["xyz", "XYZ Tiles", true], ["globe", "WCS"], ["world", ""],
];
const bands: [string, string][] = [["#f00", "Banda 1 (Red)"], ["#0f0", "Banda 2 (Green)"], ["#00f", "Banda 3 (Blue)"]];

export default function App() {
  return (
    <>
      <Global />
      <Page>
        <TitleBar>
          <Icon n="logo" s={20} />
          <TitleText>*Proyecto sin título — QGIS</TitleText>
          <WinButtons viewBox="0 0 132 14" $right={26} $c="#999">
            <path d="M3 6.500h12M61.500 3.500h9v9h-9zM63.500 3.500v-2h9v9h-2M120.500 1.500l11 11M131.500 1.500l-11 11" />
          </WinButtons>
        </TitleBar>
        <Menu $dim>
          {menus.map(([a, b, c, w]) => <MenuItem key={a + b + c} $w={w}>{a}<u>{b}</u>{c}</MenuItem>)}
        </Menu>
        <Bar $h={39}>
          <Tools items="| newdoc open save layout layoutmgr style | hand pansel *zoomin zoomout zoomfull zoomsel zoomlayer zoom11 zoomlast ~zoomnext newmap new3d newbook book clock refresh | ~select w ~form w deselect v selloc | info ~abacus gear sigma ~table w measure v tip ~action w" />
        </Bar>
        <Bar $h={39}>
          <Tools items="| dsm geopack vnew feathernew chip meshnew vboxnew | ~pens ~pen ~saveed ~line w ~pts ~vertex w ~multi ~trash ~cut ~copy ~paste ~undo ~redo | ~tag ~diagram / tagpin tagred / ~tagpinoff ~tageye ~tagmove ~tagrot ~taged | python | help |" />
        </Bar>
        <Bar $h={39}>
          <Tools items="| magnet ~snapv ~*snapdots" />
          <Spin $w={93} $h={24} $dim>12<Grow /><Stepper off /></Spin>
          <Label $w={2} />
          <Spin $w={120} $h={24} $dim $pad={4}>px<Grow /><Caret $w={27} $off /></Spin>
          <Tools items="topo overlap ~cross ~self w ~trace" />
        </Bar>
        <Bar $h={38}>
          <Tools items="| ~sh1 w ~sh2 w ~sh3 w ~sh4 w ~sh5 w | ~meshed ~meshsel w ~meshtr ~meshg none seg2 seg3 seg seg seg4 none frame" />
        </Bar>
        <Body>
          <SideBar>
            <HGrip $x={21} />
            <SideList>
              {side.map(([n, more, inset], i) => (
                <SideRow key={i} $in={inset}>
                  <Icon n={n} />
                  {more && <Caret $w={15} />}
                </SideRow>
              ))}
            </SideList>
          </SideBar>
          <Docks>
            <DockTitle $h={23}>Capas</DockTitle>
            <DockTools>
              {["brush", "addgrp", "eye", "filt", "~eps"].map((n) => (
                <SmallCell key={n}><Icon n={n.replace("~", "")} s={16} off={n[0] === "~"} /></SmallCell>
              ))}
              <Caret $w={15} $off />
              {["tdown", "tup", "rmlayer"].map((n) => <SmallCell key={n}><Icon n={n} s={16} /></SmallCell>)}
            </DockTools>
            <Frame $h={345}>
              <List>
                <Row $sel $pad={5}>
                  <Caret $w={15} />
                  <Lead $w={8} />
                  <Lead $w={25}><Box /></Lead>
                  <Lead $w={23}><Icon n="rast" s={17} /></Lead>
                  <LayerName>torres_modified_tarea4</LayerName>
                </Row>
                {bands.map(([c, t]) => <Row key={t} $pad={53}><Swatch $c={c} />{t}</Row>)}
              </List>
            </Frame>
            <Splitter><HGrip $x={219} /></Splitter>
            <DockTitle $h={22}>Navegador</DockTitle>
            <DockTools>
              {["addlayer", "refresh", "funnel", "tup", "infoc"].map((n) => <SmallCell key={n}><Icon n={n} s={16} /></SmallCell>)}
            </DockTools>
            <Frame $h={336}>
              <List>
                {places.map(([n, t, more], i) => (
                  <Row key={i} $pad={2}>
                    <Lead $w={18}>{more && <Caret $right $w={13} />}</Lead>
                    <Lead $w={26}><Icon n={n} s={19} /></Lead>
                    {t}
                  </Row>
                ))}
              </List>
              <Scroll><Thumb /><ScrollEnd><Caret /></ScrollEnd></Scroll>
            </Frame>
          </Docks>
          <Canvas />
        </Body>
        <Status>
          <Search><Icon n="search" s={15} />Escriba para localizar (Ctrl+K)</Search>
          <Label $w={72}>Coordenada</Label>
          <Spin $w={135} $pad={6} $ls={0.2}>9,96303º -84,10689º</Spin>
          <Label $w={3} />
          <Label $w={34}><Icon n="track" s={20} /></Label>
          <Label $w={39}>Escala</Label>
          <Spin $w={93} $pad={3}>1:33366<Grow /><Caret $w={26} /></Spin>
          <Label $w={12} />
          <Label $w={25}><Icon n="lock" s={17} /></Label>
          <Label $w={75}>Amplificador</Label>
          <Spin $w={92} $pad={4}>100%<Grow /><Stepper /></Spin>
          <Label $w={10} />
          <Label $w={57}>Rotación</Label>
          <Spin $w={88} $ls={0.3}>0,0 º<Grow /><Stepper /></Spin>
          <Label $w={8} />
          <Box><Tick /></Box>
          <Label $w={5} />
          <Label $w={86}>Representar</Label>
          <Icon n="crs" s={18} />
          <Label $w={3} />
          <Label $w={88} $ls={0.05}>EPSG:4326</Label>
          <Icon n="bubble" s={21} />
        </Status>
        <Taskbar />
        <Georeferencer />
      </Page>
    </>
  );
}
